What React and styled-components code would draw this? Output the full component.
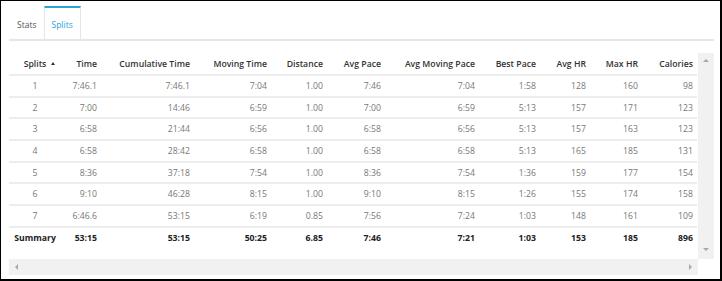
import React from "react";
import styled, { createGlobalStyle } from "styled-components";

const Global = createGlobalStyle`
  html, body { margin: 0; padding: 0; background: #fff; }
  body { font-family: "Open Sans", "Liberation Sans", sans-serif; }
`;

const Frame = styled.div`
  box-sizing: border-box;
  width: 722px;
  height: 281px;
  border-style: solid;
  border-color: #000;
  border-width: 1px 2px 2px 1px;
  padding: 5px 6px 0 8px;
  display: flex;
  flex-direction: column;
  background: #fff;
`;

const TabBar = styled.div`
  display: flex;
  height: 33px;
  border-bottom: 2px solid #e6e6e6;
  flex-shrink: 0;
`;

const Tab = styled.div`
  box-sizing: border-box;
  height: 33px;
  padding: 1px ${(p) => (p.$active ? "7px" : "6px")} 0 7px;
  display: flex;
  align-items: center;
  font-size: 8.5px;
  color: ${(p) => (p.$active ? "#2aa3dd" : "#555")};
  background: #fff;
  border-top: 2px solid ${(p) => (p.$active ? "#2aa3dd" : "transparent")};
  border-left: 1px solid ${(p) => (p.$active ? "#e6e6e6" : "transparent")};
  border-right: 1px solid ${(p) => (p.$active ? "#e6e6e6" : "transparent")};
`;

const ScrollArea = styled.div`
  margin-top: 12px;
  height: 222px;
  display: grid;
  grid-template-columns: 689px 16px;
  grid-template-rows: 206px 16px;
`;

const TableWrap = styled.div`
  overflow: hidden;
`;

const Table = styled.table`
  border-collapse: collapse;
  table-layout: fixed;
  width: 688px;
  font-size: 8.7px;
`;

const Th = styled.th`
  box-sizing: border-box;
  height: 22px;
  padding: 0 4px 0 0;
  font-weight: 600;
  color: #333;
  text-align: ${(p) => (p.$center ? "center" : "right")};
  border-bottom: 2px solid #ededed;
  white-space: nowrap;
  ${(p) => (p.$center ? "padding: 0;" : "")}
`;

const SortLabel = styled.span`
  position: relative;
  display: inline-block;
`;

const SortArrow = styled.span`
  position: absolute;
  left: 100%;
  top: 50%;
  margin-left: 5px;
  margin-top: -2px;
  width: 0;
  height: 0;
  border-left: 2.5px solid transparent;
  border-right: 2.5px solid transparent;
  border-bottom: 3px solid #333;
`;

const Td = styled.td`
  box-sizing: border-box;
  height: 21.7px;
  padding: 0 4px 0 0;
  color: ${(p) => (p.$summary ? "#222" : "#777")};
  font-weight: ${(p) => (p.$summary ? 700 : 400)};
  text-align: ${(p) => (p.$center ? "center" : "right")};
  border-bottom: ${(p) => (p.$summary ? "none" : "2px solid #ededed")};
  white-space: nowrap;
  ${(p) => (p.$center ? "padding: 0;" : "")}
`;

const VScroll = styled.div`
  background: #f1f1f1;
  display: flex;
  flex-direction: column;
  justify-content: space-between;
  align-items: center;
  padding: 6px 0 8px;
  box-sizing: border-box;
`;

const HScroll = styled.div`
  background: #f1f1f1;
  display: flex;
  justify-content: space-between;
  align-items: center;
  padding: 0 6px;
  box-sizing: border-box;
`;

const Corner = styled.div`
  background: #fff;
`;

const Arrow = styled.span`
  width: 0;
  height: 0;
  ${(p) =>
    p.$dir === "up"
      ? "border-left: 3px solid transparent; border-right: 3px solid transparent; border-bottom: 3px solid #a8a8a8;"
      : p.$dir === "down"
      ? "border-left: 3px solid transparent; border-right: 3px solid transparent; border-top: 3px solid #a8a8a8;"
      : p.$dir === "left"
      ? "border-top: 3px solid transparent; border-bottom: 3px solid transparent; border-right: 3px solid #a8a8a8;"
      : "border-top: 3px solid transparent; border-bottom: 3px solid transparent; border-left: 3px solid #a8a8a8;"}
`;

const widths = [52, 40, 93, 77, 56, 58, 94, 61, 50, 52, 55];
const headers = [
  "Splits",
  "Time",
  "Cumulative Time",
  "Moving Time",
  "Distance",
  "Avg Pace",
  "Avg Moving Pace",
  "Best Pace",
  "Avg HR",
  "Max HR",
  "Calories",
];

const rows = [
  ["1", "7:46.1", "7:46.1", "7:04", "1.00", "7:46", "7:04", "1:58", "128", "160", "98"],
  ["2", "7:00", "14:46", "6:59", "1.00", "7:00", "6:59", "5:13", "157", "171", "123"],
  ["3", "6:58", "21:44", "6:56", "1.00", "6:58", "6:56", "5:13", "157", "163", "123"],
  ["4", "6:58", "28:42", "6:58", "1.00", "6:58", "6:58", "5:13", "165", "185", "131"],
  ["5", "8:36", "37:18", "7:54", "1.00", "8:36", "7:54", "1:36", "159", "177", "154"],
  ["6", "9:10", "46:28", "8:15", "1.00", "9:10", "8:15", "1:26", "155", "174", "158"],
  ["7", "6:46.6", "53:15", "6:19", "0.85", "7:56", "7:24", "1:03", "148", "161", "109"],
];
const summary = ["Summary", "53:15", "53:15", "50:25", "6.85", "7:46", "7:21", "1:03", "153", "185", "896"];

export default function App() {
  return (
    <>
      <Global />
      <Frame>
        <TabBar>
          <Tab>Stats</Tab>
          <Tab $active>Splits</Tab>
        </TabBar>
        <ScrollArea>
          <TableWrap>
            <Table>
              <colgroup>
                {widths.map((w, i) => (
                  <col key={i} style={{ width: w }} />
                ))}
              </colgroup>
              <thead>
                <tr>
                  {headers.map((h, i) =>
                    i === 0 ? (
                      <Th key={h} $center>
                        <SortLabel>
                          {h}
                          <SortArrow />
                        </SortLabel>
                      </Th>
                    ) : (
                      <Th key={h}>{h}</Th>
                    )
                  )}
                </tr>
              </thead>
              <tbody>
                {rows.map((r) => (
                  <tr key={r[0]}>
                    {r.map((c, i) => (
                      <Td key={i} $center={i === 0}>
                        {c}
                      </Td>
                    ))}
                  </tr>
                ))}
                <tr>
                  {summary.map((c, i) => (
                    <Td key={i} $center={i === 0} $summary>
                      {c}
                    </Td>
                  ))}
                </tr>
              </tbody>
            </Table>
          </TableWrap>
          <VScroll>
            <Arrow $dir="up" />
            <Arrow $dir="down" />
          </VScroll>
          <HScroll>
            <Arrow $dir="left" />
            <Arrow $dir="right" />
          </HScroll>
          <Corner />
        </ScrollArea>
      </Frame>
    </>
  );
}
